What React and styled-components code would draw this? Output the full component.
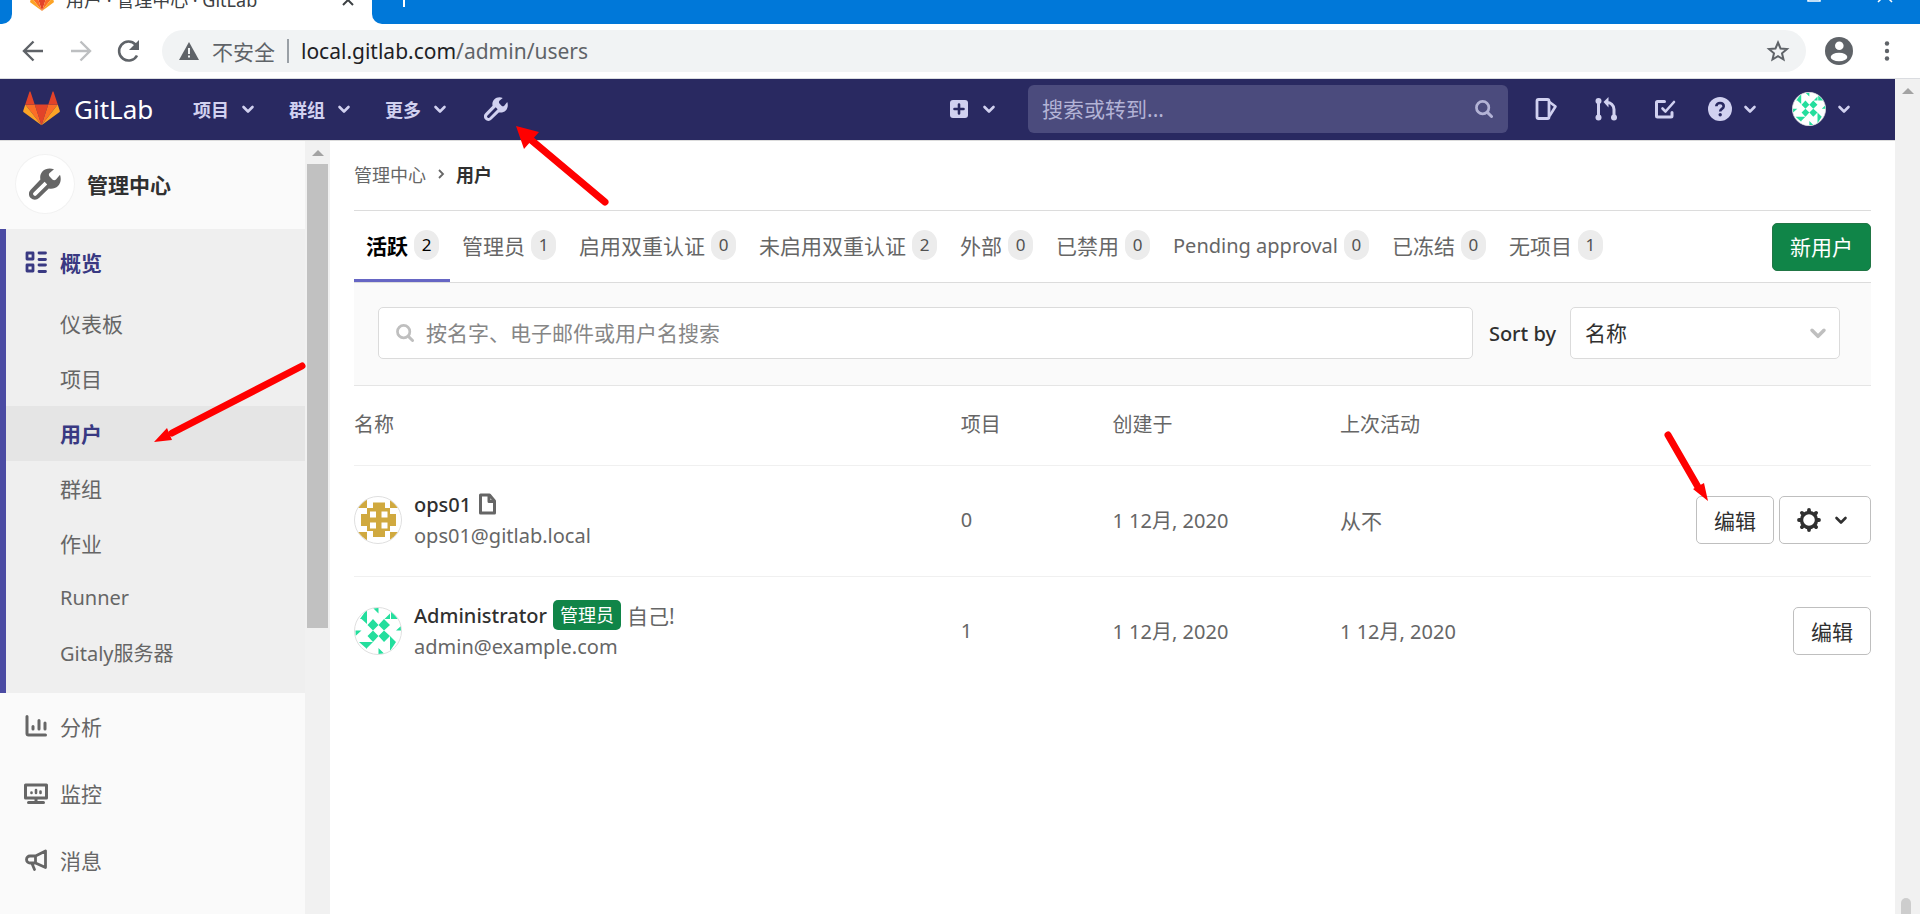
import React, { useState } from 'react';
import styled, { createGlobalStyle } from 'styled-components';

const GlobalStyle = createGlobalStyle`
  * {
    box-sizing: border-box;
  }

  html, body, #root {
    height: 100%;
  }

  body {
    margin: 0;
    overflow: hidden;
    font-family: 'Noto Sans', 'Noto Sans CJK SC', sans-serif;
    font-size: 20px;
    color: #303030;
    background: #fff;
  }

  button, input, select {
    font: inherit;
    color: inherit;
  }

  a {
    color: inherit;
    text-decoration: none;
  }

  svg {
    display: block;
    flex: none;
  }
`;

const Window = styled.div`
  position: relative;
  display: flex;
  flex-direction: column;
  height: 100%;
`;

/* ---------- browser ---------- */

const TabStrip = styled.div`
  display: flex;
  height: 24px;
  flex: none;
  overflow: hidden;
  background: #fff;
`;

const StripLeft = styled.div`
  width: 12px;
  background: #0078d9;
  border-bottom-right-radius: 10px;
`;

const BrowserTab = styled.div`
  display: flex;
  align-items: center;
  width: 360px;
  height: 24px;
  margin-top: -12px;
  padding: 0 18px;
  gap: 12px;
  font-size: 18px;
  line-height: 24px;
  color: #3c4043;

  span {
    flex: 1;
    white-space: nowrap;
  }
`;

const StripRight = styled.div`
  display: flex;
  flex: 1;
  align-items: flex-start;
  justify-content: space-between;
  padding: 0 27px 0 23px;
  background: #0078d9;
  border-bottom-left-radius: 10px;
`;

const IconButton = styled.button`
  display: flex;
  align-items: center;
  gap: ${(p) => p.$gap || 0}px;
  padding: 0;
  border: 0;
  background: none;
  color: ${(p) => p.$color || 'inherit'};
`;

const WindowButtons = styled.div`
  display: flex;
  align-items: flex-start;
  gap: 56px;
  margin-top: -12px;
`;

const AddressRow = styled.div`
  display: flex;
  align-items: center;
  height: 55px;
  flex: none;
  padding: 0 21px;
  border-bottom: 1px solid #dadce0;
  color: #5f6368;
`;

const NavButtons = styled.div`
  display: flex;
  gap: 24px;
  width: 141px;
`;

const AddressBar = styled.div`
  display: flex;
  align-items: center;
  flex: 1;
  height: 42px;
  padding: 0 16px;
  gap: 12px;
  border-radius: 21px;
  background: #f1f3f4;
  font-size: 21px;
`;

const Divider = styled.i`
  width: 2px;
  height: 24px;
  background: #9aa0a6;
`;

const Url = styled.span`
  flex: 1;

  b {
    font-weight: 400;
    color: #202124;
  }
`;

const BrowserActions = styled.div`
  display: flex;
  align-items: center;
  gap: 22px;
  margin-left: 19px;
`;

/* ---------- page ---------- */

const Viewport = styled.div`
  display: flex;
  flex: 1;
  min-height: 0;
`;

const Page = styled.div`
  display: flex;
  flex-direction: column;
  flex: 1;
  min-width: 0;
`;

const ScrollTrack = styled.div`
  display: flex;
  flex-direction: column;
  align-items: center;
  width: 25px;
  flex: none;
  background: #f1f1f1;
`;

const ScrollArrow = styled.i`
  width: 0;
  height: 0;
  margin: 9px 0 8px;
  border: 6px solid transparent;
  border-top-width: 0;
  border-bottom-color: #a3a3a3;
`;

const ScrollThumb = styled.i`
  width: 21px;
  height: 60%;
  background: #c1c1c1;
`;

const RoundThumb = styled.i`
  width: 10px;
  height: 16px;
  margin-top: auto;
  margin-right: 4px;
  border-radius: 5px 5px 0 0;
  background: #cdcdcd;
`;

const Navbar = styled.header`
  display: flex;
  align-items: center;
  height: 62px;
  flex: none;
  padding: 0 45px 2px 23px;
  border-bottom: 1px solid #dcdcdc;
  background: #292961;
  color: #d1d1f0;
`;

const Brand = styled.a`
  display: flex;
  align-items: center;
  gap: 14px;
  width: 170px;
  font-size: 26px;
  color: #fff;
`;

const NavMenu = styled.button`
  display: flex;
  align-items: center;
  gap: 13px;
  width: 96px;
  padding: 0;
  border: 0;
  background: none;
  font-size: 18px;
  font-weight: 700;
`;

const NavRight = styled.div`
  display: flex;
  align-items: center;
  margin-left: auto;
`;

const NavSearch = styled.label`
  display: flex;
  align-items: center;
  width: 480px;
  height: 48px;
  margin: 0 26px 0 33px;
  padding: 0 15px 0 14px;
  border-radius: 6px;
  background: #4b4b7d;

  input {
    flex: 1;
    min-width: 0;
    padding: 0;
    border: 0;
    outline: 0;
    background: none;
    font-size: 21px;
  }

  input::placeholder {
    color: #b3b3d6;
  }

  svg {
    color: #b3b3d6;
  }
`;

const NavIcons = styled.nav`
  display: flex;
  align-items: center;
  gap: 36px;
  margin-right: 32px;
`;

const NavMenus = styled.div`
  display: flex;
  align-items: center;
  gap: 36px;
`;

const AdminLink = styled.a`
  margin-left: 3px;
`;

const Body = styled.div`
  display: flex;
  flex: 1;
  min-height: 0;
`;

const Sidebar = styled.aside`
  width: 305px;
  flex: none;
  overflow: hidden;
  background: #fafafa;
  color: #666;
  font-size: 21px;
`;

const SidebarHeader = styled.a`
  display: flex;
  align-items: center;
  gap: 13px;
  height: 88px;
  padding: 0 0 2px 16px;
  color: #303030;
  font-weight: 700;
`;

const SidebarCircle = styled.span`
  display: grid;
  place-items: center;
  width: 58px;
  height: 58px;
  border-radius: 50%;
  background: #fff;
  box-shadow: 0 0 0 1px #f2f2f2;
  color: #666;
`;

const OpenSection = styled.div`
  padding-bottom: 12px;
  border-left: 6px solid #4b4ba3;
  background: #efefef;
`;

const SectionLink = styled.a`
  display: flex;
  align-items: center;
  gap: 12px;
  height: 67px;
  padding: 0 0 2px ${(p) => (p.$active ? 18 : 24)}px;
  color: ${(p) => (p.$active ? '#393982' : '#666')};
  font-weight: ${(p) => (p.$active ? 700 : 400)};
`;

const SubLink = styled.a`
  display: flex;
  align-items: center;
  height: 55px;
  padding: 0 0 2px 54px;
  background: ${(p) => (p.$active ? '#e5e5e5' : 'none')};
  color: ${(p) => (p.$active ? '#393982' : '#666')};
  font-size: ${(p) => (p.$latin ? 20 : 21)}px;
  font-weight: ${(p) => (p.$active ? 700 : 400)};
`;

const Content = styled.main`
  flex: 1;
  min-width: 0;
  padding: 0 24px;
`;

const Breadcrumb = styled.div`
  display: flex;
  align-items: center;
  gap: 10px;
  height: 70px;
  padding-bottom: 4px;
  border-bottom: 1px solid #dcdcdc;
  font-size: 18px;
  color: #666;

  b {
    color: #303030;
  }
`;

const TabBar = styled.div`
  display: flex;
  align-items: center;
  height: 72px;
  border-bottom: 1px solid #dcdcdc;
`;

const Tab = styled.a`
  display: flex;
  align-items: center;
  gap: 6px;
  height: 71px;
  padding: 0 11px 0 12px;
  border-bottom: 3px solid ${(p) => (p.$active ? '#6666c4' : 'transparent')};
  color: ${(p) => (p.$active ? '#000' : '#666')};
  font-size: ${(p) => (p.$latin ? 20 : 21)}px;
  font-weight: ${(p) => (p.$active ? 700 : 400)};
  white-space: nowrap;
`;

const Count = styled.span`
  min-width: 25px;
  height: 30px;
  border-radius: 15px;
  background: #ececec;
  color: ${(p) => (p.$active ? '#000' : '#525252')};
  font-size: 17px;
  font-weight: 400;
  line-height: 30px;
  text-align: center;
`;

const NewUser = styled.button`
  height: 48px;
  margin-left: auto;
  padding: 0 17px;
  border: 1px solid #217645;
  border-radius: 5px;
  background: #108548;
  color: #fff;
  font-size: 21px;
  line-height: 46px;
`;

const FilterBar = styled.form`
  display: flex;
  align-items: center;
  height: 103px;
  padding: 0 31px 2px 24px;
  border-bottom: 1px solid #e5e5e5;
  background: #fafafa;
`;

const SearchBox = styled.div`
  display: flex;
  align-items: center;
  flex: 1;
  height: 52px;
  padding: 0 17px;
  gap: 12px;
  border: 1px solid #dbdbdb;
  border-radius: 5px;
  background: #fff;
  color: #bfbfbf;

  input {
    flex: 1;
    padding: 0;
    border: 0;
    outline: 0;
    background: none;
    color: #303030;
    font-size: 21px;
  }

  input::placeholder {
    color: #868686;
  }
`;

const SortLabel = styled.label`
  margin: 0 14px 0 16px;
  font-weight: 500;
`;

const SelectWrap = styled.div`
  display: flex;
  align-items: center;
  position: relative;

  select {
    width: 270px;
    height: 52px;
    padding: 0 14px;
    border: 1px solid #dbdbdb;
    border-radius: 5px;
    appearance: none;
    background: #fff;
    font-size: 21px;
  }

  svg {
    position: absolute;
    right: 14px;
    color: #bfbfbf;
    pointer-events: none;
  }
`;

const Table = styled.table`
  width: 100%;
  border-collapse: collapse;
  table-layout: fixed;
  color: #666;

  th {
    height: 79px;
    padding: 0 0 3px;
    border-bottom: 1px solid #f0f0f0;
    font-weight: 400;
    text-align: left;
  }

  td {
    height: 111px;
    padding: 0 0 2px;
    border-bottom: 1px solid #f0f0f0;
  }

  tbody tr:last-child td {
    border-bottom: 0;
  }
`;

const Col = styled.col`
  width: ${(p) => p.$width};
`;

const UserCell = styled.div`
  display: flex;
  align-items: center;
  gap: 12px;
`;

const UserLine = styled.div`
  display: flex;
  align-items: center;
  gap: 6px;
  height: 31px;
  white-space: nowrap;

  a {
    color: #303030;
    font-weight: 500;
  }
`;

const Hanzi = styled.span`
  font-size: 21px;
`;

const AdminBadge = styled.span`
  height: 30px;
  padding: 0 7px;
  border-radius: 5px;
  background: #108548;
  color: #fff;
  font-size: 18px;
  line-height: 30px;
`;

const Actions = styled.div`
  display: flex;
  justify-content: flex-end;
  gap: 5px;
`;

const Button = styled.button`
  display: flex;
  align-items: center;
  height: 48px;
  padding: 0 17px;
  border: 1px solid #bfbfbf;
  border-radius: 5px;
  background: #fff;
  color: #303030;
  font-size: 21px;
`;

const MenuButton = styled(Button)`
  gap: 14px;
  padding-right: 23px;
`;

const Arrows = styled.svg`
  position: absolute;
  top: 0;
  left: 0;
  pointer-events: none;
`;

/* ---------- icons ---------- */

const Svg = ({ size = 24, view = 16, children, ...rest }) => (
  <svg width={size} height={size} viewBox={`0 0 ${view} ${view}`} fill="none" stroke="currentColor" aria-hidden="true" {...rest}>
    {children}
  </svg>
);

const Chevron = ({ size = 12 }) => (
  <Svg size={size} view={12} strokeWidth="2.6" strokeLinecap="round" strokeLinejoin="round" overflow="visible">
    <path d="M1.5 4 6 8.5 10.5 4" />
  </Svg>
);

const Wrench = ({ size }) => (
  <Svg size={size} view={32} stroke="none" fill="currentColor" fillRule="evenodd">
    <path d="M25 1.3C21-.3 16.3.4 13.6 3.3c-2.200 2.300-2.800 5.300-2.200 8.300L1.7 21.700a5.800 5.800 0 0 0 0 8.400 5.800 5.800 0 0 0 8.300 0l9.800-9.500c3.600.6 6.800-.2 9.200-2.600 2.800-2.900 3.400-7.200 2-11.200l-4 4.700c-1 1-2.600 1-3.600 0l-2.800-2.900c-1-1-1-2.600 0-3.600zM15.600 13.800l2.600 2.600L7.400 27.200a1.900 1.900 0 0 1-2.700-2.700z" />
  </Svg>
);

const Magnifier = ({ size = 18 }) => (
  <Svg size={size} strokeWidth="2.4" strokeLinecap="round">
    <circle cx="6.8" cy="6.8" r="5.5" />
    <path d="M11 11l3.700 3.700" strokeWidth="2.6" />
  </Svg>
);

const Tanuki = ({ size }) => (
  <Svg size={size} view={36} stroke="none">
    <path fill="#e24329" d="M18 34.4 24.6 14H11.4z" />
    <path fill="#fc6d26" d="M18 34.4 11.4 14H2.2zM18 34.4 24.6 14h9.2z" />
    <path fill="#fca326" d="M2.2 14 .2 20.2c-.2.6 0 1.2.5 1.5L18 34.4zM33.8 14l2 6.2c.2.6 0 1.2-.5 1.5L18 34.4z" />
    <path fill="#e24329" d="M2.2 14h9.2L7.4 1.9c-.2-.6-1-.6-1.2 0zM33.800 14h-9.200l4-12.100c.2-.6 1-.6 1.2 0z" />
  </Svg>
);

const Issues = () => (
  <Svg size={24} view={24} strokeWidth="2.8" strokeLinejoin="round">
    <rect x="3" y="2.500" width="12" height="19" rx="1.5" />
    <path d="M15.500 5 21.500 9.500 15.500 19" strokeWidth="2.6" />
  </Svg>
);

const MergeRequest = () => (
  <Svg size={24} view={24} strokeWidth="3">
    <path d="M4.500 4v16M13 5.500c3.500 0 7 2.500 7 7V20" />
    <g fill="currentColor" stroke="none">
      <circle cx="4.5" cy="4" r="3" />
      <circle cx="4.5" cy="20.500" r="3" />
      <circle cx="20" cy="20.500" r="3" />
      <path d="M14.500 0v10.500L9.500 5z" />
    </g>
  </Svg>
);

const Todo = () => (
  <Svg size={22} view={22} strokeWidth="3" strokeLinecap="round" strokeLinejoin="round">
    <path d="M10.500 3.500H3.500a1 1 0 0 0-1 1v13.500a1 1 0 0 0 1 1H17a1 1 0 0 0 1-1V14.500" />
    <path d="M8.500 10.500l3 3 8.500-9.500" strokeWidth="2.6" />
  </Svg>
);

const Help = () => (
  <Svg size={24} view={24}>
    <circle cx="12" cy="12" r="12" fill="currentColor" stroke="none" />
    <path d="M8.3 9.300c0-2 1.600-3.300 3.700-3.300 2.200 0 3.700 1.200 3.700 3.200 0 2.800-3.500 2.600-3.500 5.300" stroke="#292961" strokeWidth="2.6" />
    <circle cx="12.2" cy="17.7" r="1.7" fill="#292961" stroke="none" />
  </Svg>
);

const PlusSquare = () => (
  <Svg size={18} view={18}>
    <rect width="18" height="18" rx="3" fill="currentColor" stroke="none" />
    <path d="M9 4.500v9M4.500 9h9" stroke="#292961" strokeWidth="2.6" strokeLinecap="round" />
  </Svg>
);

const Overview = () => (
  <Svg size={24} view={24} strokeWidth="2.8" strokeLinecap="round" strokeLinejoin="round">
    <path d="M3 3h6v6H3zM3 15h6v6H3zM15 3h6.500M15 9.500h6.500M15 15h6.500M15 21.500h6.500" />
  </Svg>
);

const Analytics = () => (
  <Svg size={24} view={24} strokeWidth="3" strokeLinecap="round" strokeLinejoin="round">
    <path d="M3 2.500v17a1.500 1.500 0 0 0 1.500 1.500H21.500M9 12.500v2.500M15 6.500V15M21 9v6" />
  </Svg>
);

const Monitor = () => (
  <Svg size={24} view={24} strokeWidth="3" strokeLinecap="round" strokeLinejoin="round">
    <path d="M1.500 4h21v13h-21zM12 17v4M4.500 21.500h15" />
    <path d="M7.500 11.500v.5M12 9v3M16.500 10.500v1.500" strokeWidth="2.6" />
  </Svg>
);

const Megaphone = () => (
  <Svg size={24} view={24} strokeWidth="2.8" strokeLinecap="round" strokeLinejoin="round">
    <path d="M21.500 3v16.500L11.500 15H6a3.500 3.500 0 0 1-3.500-3.500A3.500 3.500 0 0 1 6 8h5.500zM11.500 8.500V15M8 15.500l2.500 6" />
  </Svg>
);

const Doc = () => (
  <Svg size={22} view={22} strokeWidth="3" strokeLinejoin="round">
    <path d="M3.500 2h9l5 6v12h-14z" />
    <path d="M12 2v6.500h5.500" />
  </Svg>
);

const Gear = () => (
  <Svg size={24} view={24}>
    <circle cx="12" cy="12" r="7.5" strokeWidth="3.4" />
    <path
      d="M12 2v2M12 20v2M2 12h2M20 12h2M4.900 4.900l1 1M18.100 18.100l1 1M4.900 19.100l1-1M18.100 5.900l1-1"
      strokeWidth="3.8"
      strokeLinecap="round"
    />
  </Svg>
);

const GoldAvatar = ({ size = 48 }) => (
  <svg width={size} height={size} viewBox="0 0 48 48" role="img" aria-label="ops01">
    <clipPath id="gold"><circle cx="24" cy="24" r="23" /></clipPath>
    <circle cx="24" cy="24" r="23.5" fill="#fff" stroke="#dfdfdf" />
    <g fill="#d0a93f" clipPath="url(#gold)">
      <path d="M19 6.500h12v5.500h5v6h6v12h-6v5h-5v6H19v-6h-6v-5H7V18h6v-6h6z" />
      <path d="M13 2v10H3zM36 2l9 10h-9zM3 36h10v9zM36 36h9l-9 9z" />
    </g>
    <path d="M16 15.500h6v6h-6zM27.500 15.500h6v6h-6zM16 26.500h6v6h-6zM27.500 26.500h6v6h-6z" fill="#fff" />
  </svg>
);

const GreenAvatar = ({ size = 48 }) => (
  <svg width={size} height={size} viewBox="0 0 48 48" role="img" aria-label="Administrator">
    <clipPath id="green"><circle cx="24" cy="24" r="23" /></clipPath>
    <circle cx="24" cy="24" r="23.5" fill="#fff" stroke="#dfdfdf" />
    <g fill="#24de9d" clipPath="url(#green)">
      <path d="M19 12l5.500 6-5.500 5.500-5.500-5.500zM30 12l6 6-6 5.500-5.500-5.500zM19 23.500l5.500 5.500-5.500 6-5.500-6zM30 23.500l6 5.500-6 6-5.500-6z" />
      <path d="M13 2v10H6zM7.500 12H13v5zM19 1h5.500v5.500zM36 6.500V12h-5.500zM37 3l9 9h-9zM48 18v5.500h-6zM1.500 23.500H7.500L1.500 29zM36 29l6 6H36zM36 35h6l-6 9zM24.500 41l6 6h-6zM5 35h8v7zM13 35h6l-6 6z" />
    </g>
  </svg>
);

/* ---------- data ---------- */

const tabs = [
  ['活跃', 2],
  ['管理员', 1],
  ['启用双重认证', 0],
  ['未启用双重认证', 2],
  ['外部', 0],
  ['已禁用', 0],
  ['Pending approval', 0],
  ['已冻结', 0],
  ['无项目', 1],
];

const overviewLinks = ['仪表板', '项目', '用户', '群组', '作业', 'Runner', 'Gitaly服务器'];

const users = [
  { name: 'ops01', email: 'ops01@gitlab.local', projects: 0, created: '1 12月, 2020', last: null, avatar: <GoldAvatar />, note: true, removable: true },
  { name: 'Administrator', email: 'admin@example.com', projects: 1, created: '1 12月, 2020', last: '1 12月, 2020', avatar: <GreenAvatar />, admin: true },
];

const isLatin = (label) => /^[A-Z]/.test(label);

const BrowserChrome = () => (
  <>
    <TabStrip>
      <StripLeft />
      <BrowserTab>
        <Tanuki size={24} />
        <span>用户 · 管理中心 · GitLab</span>
        <IconButton aria-label="Close tab">
          <Svg size={12} view={12} strokeWidth="2"><path d="M1 1l10 10M11 1 1 11" /></Svg>
        </IconButton>
      </BrowserTab>
      <StripRight>
        <IconButton aria-label="New tab" $color="#fff">
          <Svg size={18} view={18} strokeWidth="2"><path d="M9 0v7" /></Svg>
        </IconButton>
        <WindowButtons>
          <IconButton aria-label="Maximize" $color="#fff">
            <Svg size={14} view={14} strokeWidth="1.5"><path d="M1 1h12v12H1z" /></Svg>
          </IconButton>
          <IconButton aria-label="Close" $color="#fff">
            <Svg size={16} view={16} strokeWidth="1.5"><path d="M1 0l14 14M15 0 1 14" /></Svg>
          </IconButton>
        </WindowButtons>
      </StripRight>
    </TabStrip>
    <AddressRow>
      <NavButtons>
        <IconButton aria-label="Back">
          <Svg view={24} strokeWidth="2.4"><path d="M22 12H4M12.500 2.500 3 12l9.500 9.500" /></Svg>
        </IconButton>
        <IconButton aria-label="Forward" $color="#bdbfc1">
          <Svg view={24} strokeWidth="2.4"><path d="M2 12h18M11.500 2.500 21 12l-9.500 9.500" /></Svg>
        </IconButton>
        <IconButton aria-label="Reload">
          <Svg view={24} strokeWidth="2.6">
            <path d="M20 16.500A9.500 9.500 0 1 1 18.500 5.500" />
            <path d="M22 1v10H12z" fill="currentColor" stroke="none" />
          </Svg>
        </IconButton>
      </NavButtons>
      <AddressBar>
        <Svg size={22} view={22} stroke="none">
          <path d="M11 2 21 20H1z" fill="currentColor" />
          <path d="M10 8h2v6h-2zM10 15.500h2v2h-2z" fill="#f1f3f4" />
        </Svg>
        <span>不安全</span>
        <Divider />
        <Url><b>local.gitlab.com</b>/admin/users</Url>
        <IconButton aria-label="Bookmark">
          <Svg view={24} strokeWidth="2"><path d="M12 3.500l2.500 6 6.500.5-5 4.300 1.500 6.200-5.500-3.300-5.500 3.300L8 14.300 3 10l6.500-.5z" /></Svg>
        </IconButton>
      </AddressBar>
      <BrowserActions>
        <IconButton aria-label="Profile">
          <Svg size={28} view={28} stroke="none">
            <circle cx="14" cy="14" r="14" fill="currentColor" />
            <circle cx="14.3" cy="8.8" r="4.3" fill="#fff" />
            <ellipse cx="14" cy="20" rx="8.3" ry="4.3" fill="#fff" />
          </Svg>
        </IconButton>
        <IconButton aria-label="Menu">
          <Svg view={24} stroke="none">
            <g fill="currentColor"><circle cx="12" cy="4.5" r="2.2" /><circle cx="12" cy="12" r="2.2" /><circle cx="12" cy="19.5" r="2.2" /></g>
          </Svg>
        </IconButton>
      </BrowserActions>
    </AddressRow>
  </>
);

const TopNav = () => (
  <Navbar>
    <Brand href="#"><Tanuki size={37} />GitLab</Brand>
    <NavMenu>项目<Chevron /></NavMenu>
    <NavMenu>群组<Chevron /></NavMenu>
    <NavMenu>更多<Chevron /></NavMenu>
    <AdminLink href="#admin" aria-label="Admin"><Wrench size={24} /></AdminLink>
    <NavRight>
      <IconButton aria-label="New" $gap={15}><PlusSquare /><Chevron /></IconButton>
      <NavSearch>
        <input aria-label="Search" placeholder="搜索或转到..." />
        <Magnifier />
      </NavSearch>
      <NavIcons>
        <a href="#issues" aria-label="Issues"><Issues /></a>
        <a href="#mr" aria-label="Merge requests"><MergeRequest /></a>
        <a href="#todos" aria-label="To-dos"><Todo /></a>
      </NavIcons>
      <NavMenus>
        <IconButton aria-label="Help" $gap={12}><Help /><Chevron /></IconButton>
        <IconButton aria-label="Account" $gap={12}><GreenAvatar size={34} /><Chevron /></IconButton>
      </NavMenus>
    </NavRight>
  </Navbar>
);

const SideNav = () => (
  <Sidebar>
    <SidebarHeader href="#admin">
      <SidebarCircle><Wrench size={32} /></SidebarCircle>
      管理中心
    </SidebarHeader>
    <OpenSection>
      <SectionLink href="#overview" $active><Overview />概览</SectionLink>
      {overviewLinks.map((label) => (
        <SubLink key={label} href="#" $active={label === '用户'} $latin={isLatin(label)}>{label}</SubLink>
      ))}
    </OpenSection>
    <SectionLink href="#analytics"><Analytics />分析</SectionLink>
    <SectionLink href="#monitoring"><Monitor />监控</SectionLink>
    <SectionLink href="#messages"><Megaphone />消息</SectionLink>
  </Sidebar>
);

const UserRow = ({ user }) => (
  <tr>
    <td>
      <UserCell>
        {user.avatar}
        <div>
          <UserLine>
            <a href="#user">{user.name}</a>
            {user.note && <Doc />}
            {user.admin && <AdminBadge>管理员</AdminBadge>}
            {user.admin && <Hanzi>自己!</Hanzi>}
          </UserLine>
          <UserLine>{user.email}</UserLine>
        </div>
      </UserCell>
    </td>
    <td>{user.projects}</td>
    <td>{user.created}</td>
    <td>{user.last || <Hanzi>从不</Hanzi>}</td>
    <td>
      <Actions>
        <Button>编辑</Button>
        {user.removable && <MenuButton aria-label="Settings"><Gear /><Chevron /></MenuButton>}
      </Actions>
    </td>
  </tr>
);

const App = () => {
  const [activeTab, setActiveTab] = useState('活跃');

  return (
    <Window>
      <GlobalStyle />
      <BrowserChrome />
      <Viewport>
        <Page>
          <TopNav />
          <Body>
            <SideNav />
            <ScrollTrack>
              <ScrollArrow />
              <ScrollThumb />
            </ScrollTrack>
            <Content>
              <Breadcrumb>
                <a href="#admin">管理中心</a>
                <Svg size={10} view={10} strokeWidth="1.8"><path d="M3 1l4 4-4 4" /></Svg>
                <b>用户</b>
              </Breadcrumb>
              <TabBar>
                {tabs.map(([label, count]) => (
                  <Tab
                    key={label}
                    href="#tab"
                    $active={label === activeTab}
                    $latin={isLatin(label)}
                    onClick={() => setActiveTab(label)}
                  >
                    {label}
                    <Count $active={label === activeTab}>{count}</Count>
                  </Tab>
                ))}
                <NewUser>新用户</NewUser>
              </TabBar>
              <FilterBar>
                <SearchBox>
                  <Magnifier />
                  <input aria-label="Search users" placeholder="按名字、电子邮件或用户名搜索" />
                </SearchBox>
                <SortLabel htmlFor="sort">Sort by</SortLabel>
                <SelectWrap>
                  <select id="sort"><option>名称</option></select>
                  <Chevron size={16} />
                </SelectWrap>
              </FilterBar>
              <Table>
                <colgroup>
                  <Col $width="40%" />
                  <Col $width="10%" />
                  <Col $width="15%" />
                  <Col $width="15%" />
                  <Col $width="20%" />
                </colgroup>
                <thead>
                  <tr><th>名称</th><th>项目</th><th>创建于</th><th>上次活动</th><th aria-label="Actions" /></tr>
                </thead>
                <tbody>
                  {users.map((user) => <UserRow key={user.name} user={user} />)}
                </tbody>
              </Table>
            </Content>
          </Body>
        </Page>
        <ScrollTrack>
          <ScrollArrow />
          <RoundThumb />
        </ScrollTrack>
      </Viewport>
      <Arrows width="1920" height="914" viewBox="0 0 1920 914" fill="red" stroke="red" aria-hidden="true">
        <path d="M605 202 530 139M302 366 172 433M1668 435 1698 487" strokeWidth="7" strokeLinecap="round" />
        <path d="M516 126 539 132 524 149zM154 442 167 428 172 440zM1708 501 1693 489 1704 483z" stroke="none" />
      </Arrows>
    </Window>
  );
};

export default App;
